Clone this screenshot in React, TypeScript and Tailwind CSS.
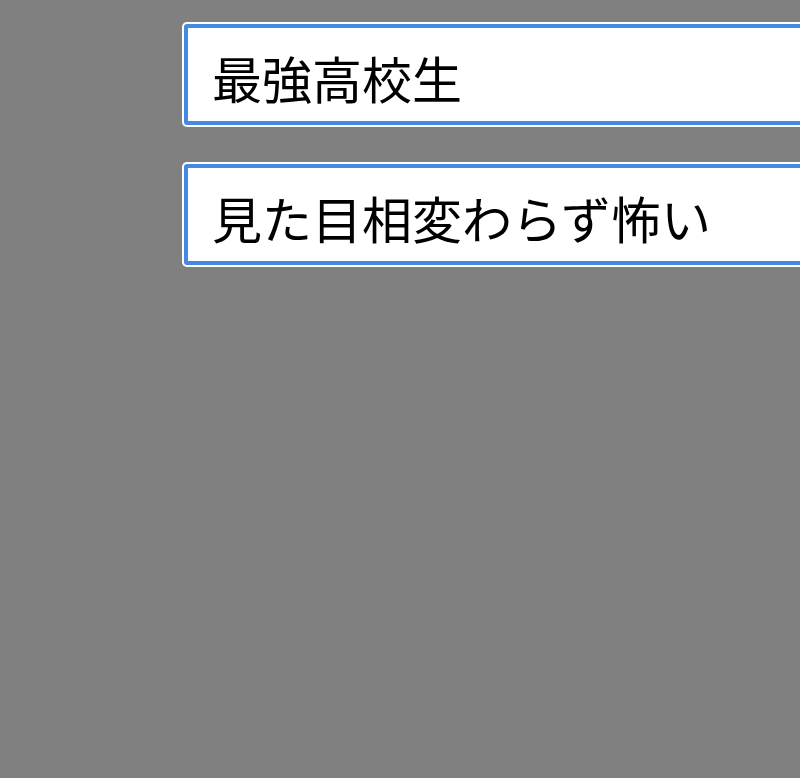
const items = ["最強高校生", "見た目相変わらず怖い"];

export default function App() {
  return (
    <div className="h-[778px] w-full overflow-hidden bg-[#808080] pt-[22px] pl-[182px]">
      <div className="flex w-[660px] flex-col gap-[35px]">
        {items.map((text) => (
          <div key={text} className="rounded-[5px] bg-white p-[2px]">
            <div className="flex h-[101px] items-center rounded-[3px] border-4 border-[#4489e4] bg-white pl-[24px] pt-[4px]">
              <span
                className="text-[50px] leading-none text-black"
                style={{ fontFamily: '"Noto Sans CJK JP", "Noto Sans", sans-serif' }}
              >
                {text}
              </span>
            </div>
          </div>
        ))}
      </div>
    </div>
  );
}
